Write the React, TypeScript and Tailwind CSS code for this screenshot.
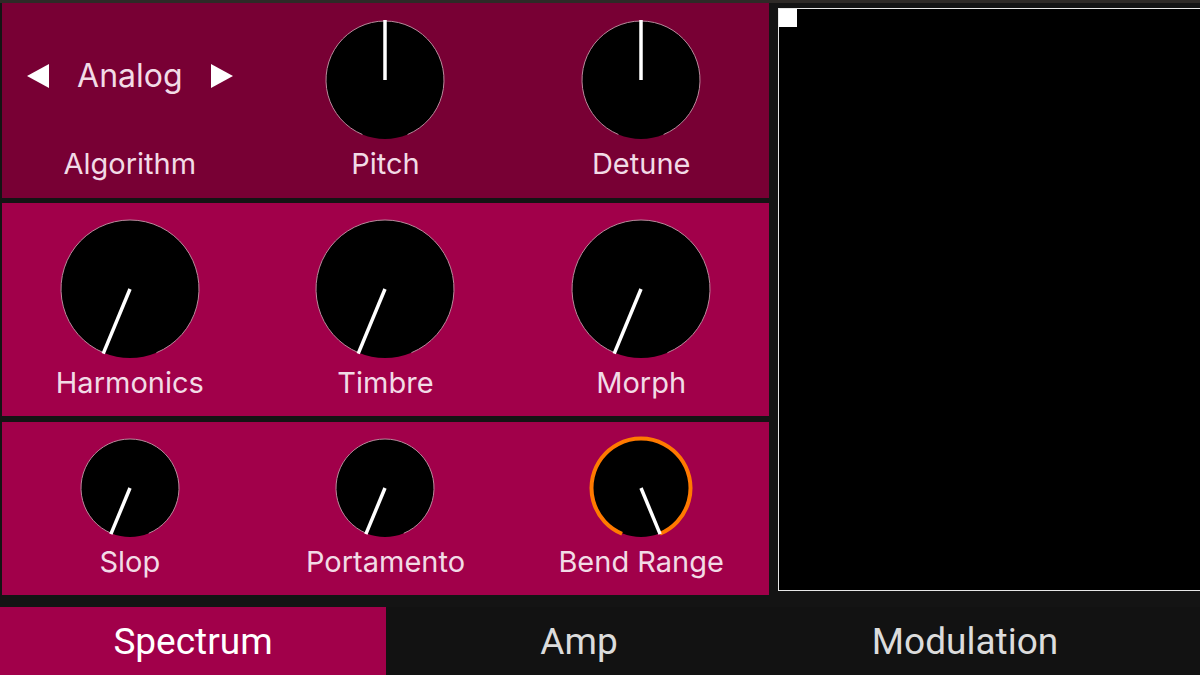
import React from 'react';

const FONT = { fontFamily: 'Inter, "Noto Sans", sans-serif' };

// angle in degrees, 0 = straight up, clockwise positive
function polar(cx: number, cy: number, r: number, deg: number) {
  const rad = ((deg - 90) * Math.PI) / 180;
  return { x: cx + r * Math.cos(rad), y: cy + r * Math.sin(rad) };
}

function arcPath(cx: number, cy: number, r: number, from: number, to: number) {
  const a = polar(cx, cy, r, from);
  const b = polar(cx, cy, r, to);
  const large = to - from > 180 ? 1 : 0;
  return `M ${a.x} ${a.y} A ${r} ${r} 0 ${large} 1 ${b.x} ${b.y}`;
}

function Knob({ size, angle, active }: { size: number; angle: number; active?: boolean }) {
  const pad = 4;
  const box = size + pad * 2;
  const c = box / 2;
  const r = size / 2;
  const tip = polar(c, c, r + 1, angle);
  return (
    <svg width={box} height={box} viewBox={`0 0 ${box} ${box}`} className="block" style={{ margin: -pad }}>
      <circle cx={c} cy={c} r={r} fill="#000" />
      {active ? (
        <path d={arcPath(c, c, r + 0.5, -157.5, 157.5)} fill="none" stroke="#ff7a00" strokeWidth={4} />
      ) : (
        <path d={arcPath(c, c, r, -157.5, 157.5)} fill="none" stroke="#b98a9c" strokeWidth={1} />
      )}
      <line x1={c} y1={c} x2={tip.x} y2={tip.y} stroke="#fff" strokeWidth={3.5} />
    </svg>
  );
}

function Label({ children }: { children: React.ReactNode }) {
  return (
    <div className="mt-[9px] h-[32px] leading-[32px] text-[29px] text-[#f2dbe6] whitespace-nowrap" style={FONT}>
      {children}
    </div>
  );
}

function KnobCell({ label, size, angle, active }: { label: string; size: number; angle: number; active?: boolean }) {
  return (
    <div className="flex flex-col items-center">
      <Knob size={size} angle={angle} active={active} />
      <Label>{label}</Label>
    </div>
  );
}

function Tab({ label, active }: { label: string; active?: boolean }) {
  return (
    <div
      className={
        active
          ? 'w-[386px] h-full flex items-center justify-center bg-[#a1004a] text-white'
          : 'w-[386px] h-full flex items-center justify-center bg-[#121212] text-[#dcdcdc]'
      }
    >
      <span className="text-[37px] leading-none" style={{ fontFamily: 'Roboto, sans-serif' }}>
        {label}
      </span>
    </div>
  );
}

export default function App() {
  return (
    <div className="w-[1200px] h-[675px] bg-[#141414] flex flex-col overflow-hidden">
      <div className="h-[3px] bg-[#2e2a27]" />
      <div className="flex h-[592px]">
        {/* Left panels */}
        <div className="ml-[2px] w-[767px] flex flex-col">
          <div className="h-[195px] bg-[#780034] grid grid-cols-3 pt-[18px]">
            <div className="flex flex-col items-center">
              <div className="h-[118px] flex items-center justify-center gap-[28px] pb-[8px] text-[#f2dbe6]" style={FONT}>
                <svg width="22" height="24" viewBox="0 0 22 24" className="block">
                  <path d="M0 12 L22 0 L22 24 Z" fill="#fff" />
                </svg>
                <span className="text-[32px] leading-none">Analog</span>
                <svg width="22" height="24" viewBox="0 0 22 24" className="block">
                  <path d="M22 12 L0 0 L0 24 Z" fill="#fff" />
                </svg>
              </div>
              <Label>Algorithm</Label>
            </div>
            <KnobCell label="Pitch" size={118} angle={0} />
            <KnobCell label="Detune" size={118} angle={0} />
          </div>
          <div className="mt-[5px] h-[213px] bg-[#a1004a] grid grid-cols-3 pt-[17px]">
            <KnobCell label="Harmonics" size={138} angle={-157.5} />
            <KnobCell label="Timbre" size={138} angle={-157.5} />
            <KnobCell label="Morph" size={138} angle={-157.5} />
          </div>
          <div className="mt-[6px] h-[173px] bg-[#a1004a] grid grid-cols-3 pt-[17px]">
            <KnobCell label="Slop" size={98} angle={-157.5} />
            <KnobCell label="Portamento" size={98} angle={-157.5} />
            <KnobCell label="Bend Range" size={98} angle={157.5} active />
          </div>
        </div>
        {/* Scope */}
        <div className="ml-[9px] mt-[5px] h-[583px] flex-1 bg-black border-l border-t border-b border-[#e8e8e8]">
          <div className="w-[18px] h-[18px] bg-white" />
        </div>
      </div>
      <div className="mt-[12px] flex flex-1">
        <Tab label="Spectrum" active />
        <Tab label="Amp" />
        <Tab label="Modulation" />
        <div className="flex-1 bg-[#121212]" />
      </div>
    </div>
  );
}
